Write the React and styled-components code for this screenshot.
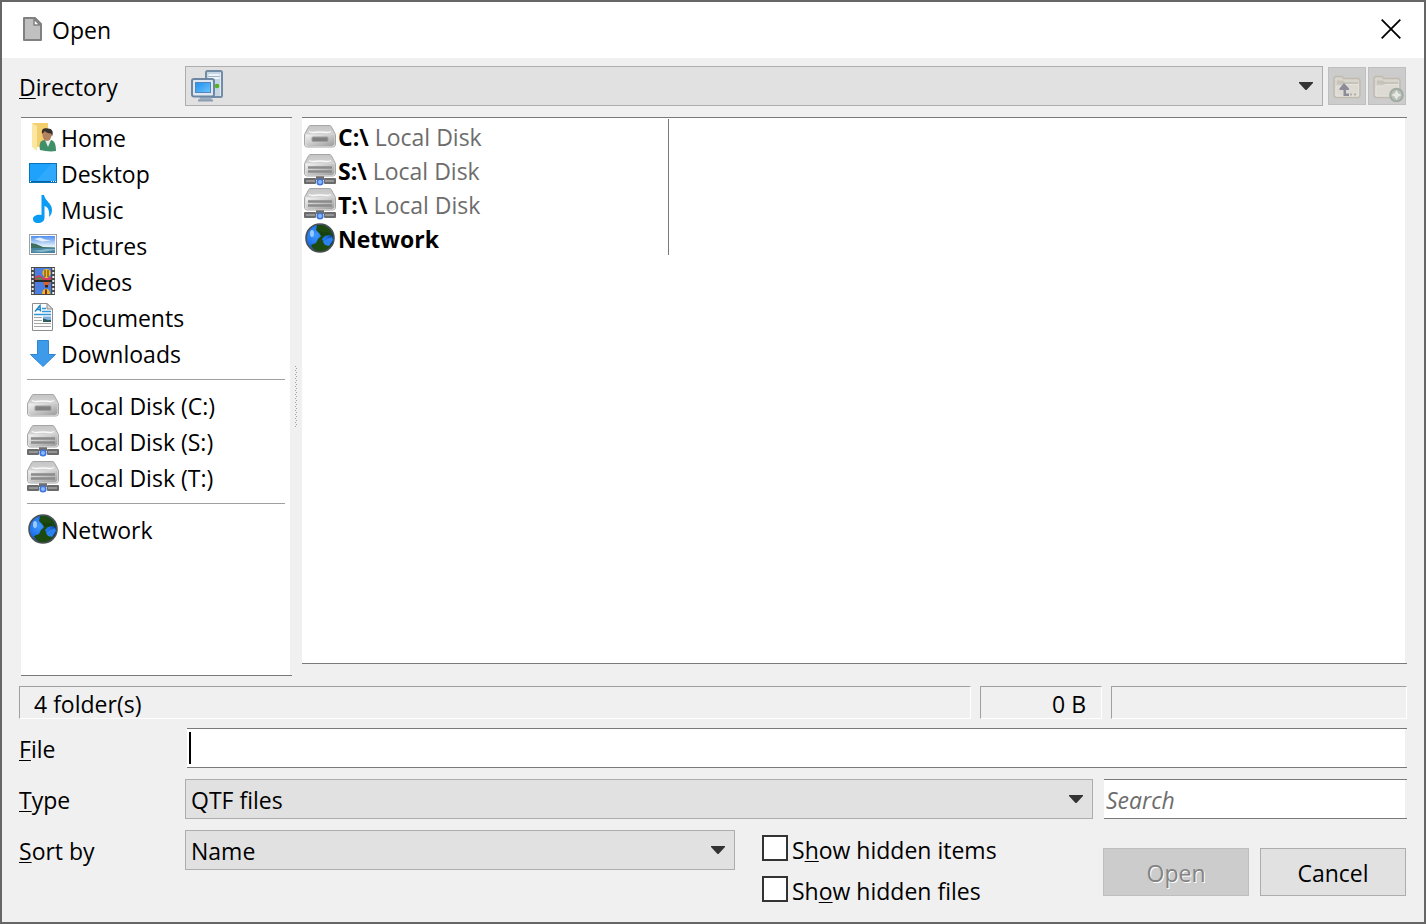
import React from 'react';
import styled, {createGlobalStyle, css} from 'styled-components';

const GlobalStyle = createGlobalStyle`
    * {
        box-sizing: border-box;
    }

    body {
        margin: 0;
        background: #f0f0f0;
    }

    body, button, input, select {
        font-family: "Open Sans", "Noto Sans", sans-serif;
        font-size: 23px;
        line-height: 32px;
        color: #000;
    }
`;

const Window = styled.div`
    display: flex;
    flex-direction: column;
    min-height: 100vh;
    border: 2px solid #666;
    background: #f0f0f0;
`;

const TitleBar = styled.header`
    display: flex;
    align-items: center;
    gap: 10px;
    height: 56px;
    padding: 0 21px 2px 20px;
    background: #fff;
`;

const Title = styled.h1`
    flex: 1;
    margin: 0;
    padding-top: 2px;
    font-size: 23px;
    font-weight: 400;
`;

const CloseButton = styled.button`
    display: flex;
    padding: 2px;
    border: 0;
    background: none;
`;

const Content = styled.main`
    flex: 1;
    display: flex;
    flex-direction: column;
    padding: 8px 17px 15px;
`;

const FormRow = styled.div`
    display: flex;
    align-items: flex-start;
    margin-top: ${props => props.$top || 0}px;
`;

const Label = styled.label`
    flex: none;
    width: 166px;
    padding-top: 5px;
`;

const Key = styled.span`
    text-decoration: underline;
    text-decoration-thickness: 1px;
    text-underline-offset: 2px;
    text-decoration-skip-ink: none;
`;

const Combo = styled.div`
    position: relative;
    flex: 1;
    height: 40px;

    select {
        appearance: none;
        width: 100%;
        height: 100%;
        padding: 2px 40px 0 5px;
        border: 1px solid #adadad;
        border-radius: 0;
        background: #e1e1e1;
        line-height: 36px;
    }
`;

const ComboArrow = styled.svg`
    position: absolute;
    top: 16px;
    right: 10px;
    pointer-events: none;
`;

const ComboIcon = styled.span`
    position: absolute;
    top: 4px;
    left: 6px;
    display: flex;
    pointer-events: none;
`;

const ToolButtons = styled.div`
    display: flex;
    gap: 2px;
    padding: 1px 1px 0 5px;
`;

const ToolButton = styled.button`
    width: 38px;
    height: 38px;
    padding: 0;
    border: 1px solid #bfbfbf;
    background: #ccc;

    svg {
        display: block;
    }
`;

const sunken = css`
    border: 0 solid #7a7a7a;
    border-width: 1px 0;
    background: #fff;
    box-shadow: inset -2px 0 #f0f0f0;
`;

const Panels = styled.div`
    flex: 1;
    display: flex;
    margin-top: 11px;
    padding-left: 2px;
`;

const Sidebar = styled.nav`
    ${sunken}
    width: 271px;
    padding: 1px 7px 0 6px;
`;

const Splitter = styled.div`
    display: flex;
    align-items: center;
    justify-content: center;
    width: 10px;
    padding-right: 2px;
`;

const FilePane = styled.section`
    ${sunken}
    flex: 1;
    margin-bottom: 12px;
    padding-top: 1px;
`;

const List = styled.ul`
    margin: 0;
    padding: 0;
    list-style: none;
`;

const FileColumn = styled(List)`
    width: 367px;
    padding-left: 2px;
    border-right: 1px solid #7a7a7a;
`;

const Entry = styled.li`
    display: flex;
    align-items: center;
    gap: ${props => props.$drive ? 9 : 2}px;
    height: ${props => props.$height}px;
    white-space: pre;

    svg {
        flex: none;
    }

    span {
        padding-top: 2px;
    }

    small {
        font-size: 23px;
        color: #6d6d6d;
    }
`;

const Separator = styled.hr`
    height: 1px;
    margin: 8px 0 7px;
    border: 0;
    background: #a0a0a0;
`;

const StatusBar = styled.footer`
    display: flex;
    gap: 9px;
    margin-top: 10px;
`;

const StatusCell = styled.div`
    flex: ${props => props.$width ? 'none' : 1};
    width: ${props => props.$width ? props.$width + 'px' : 'auto'};
    height: 33px;
    padding: 1px 15px 0 14px;
    border: 1px solid;
    border-color: #a0a0a0 #fff #fff #a0a0a0;
    text-align: ${props => props.$align || 'left'};
`;

const TextField = styled.div`
    position: relative;
    flex: ${props => props.$width ? 'none' : 1};
    width: ${props => props.$width ? props.$width + 'px' : 'auto'};
    margin-left: ${props => props.$left}px;

    input {
        ${sunken}
        display: block;
        width: 100%;
        height: 40px;
        padding: 2px 2px 0;
        border-radius: 0;
        outline: 0;
    }

    input::placeholder {
        color: #6d6d6d;
        font-style: italic;
        opacity: 1;
    }
`;

const Caret = styled.span`
    position: absolute;
    top: 4px;
    left: 2px;
    width: 2px;
    height: 32px;
    background: #000;
`;

const Options = styled.div`
    display: flex;
    flex-direction: column;
    gap: 9px;
    width: 368px;
    padding: 4px 0 0 27px;
`;

const CheckLabel = styled.label`
    display: flex;
    align-items: center;
    gap: 4px;

    input {
        appearance: none;
        width: 26px;
        height: 26px;
        margin: 0 0 4px;
        border: 2px solid #333;
        background: #fff;
    }

    input:checked {
        background: #333;
        box-shadow: inset 0 0 0 4px #fff;
    }
`;

const Actions = styled.div`
    display: flex;
    gap: 11px;
    width: 304px;
    padding: 18px 1px 0 0;
`;

const PushButton = styled.button`
    flex: 1;
    height: 48px;
    padding: 2px 0 0;
    border: 1px solid #adadad;
    background: #e1e1e1;

    &:disabled {
        border-color: #bfbfbf;
        background: #ccc;
        color: #838383;
        text-shadow: 1px 1px #fff;
    }
`;

const PageIcon = () => (
    <svg width="20" height="26" viewBox="0 0 20 26">
        <path d="M2 2h11l6 6v16H2z" fill="#c0c0c0" stroke="#808080" strokeWidth="2" strokeLinejoin="round"/>
        <path d="M12 3v6h6z" fill="#fff" stroke="#808080" strokeWidth="1.5"/>
    </svg>
);

const CloseIcon = () => (
    <svg width="20" height="20" viewBox="0 0 20 20">
        <path d="M.7.7l18.6 18.6M19.3.7L.7 19.3" stroke="#000" strokeWidth="1.8"/>
    </svg>
);

const Arrow = () => (
    <ComboArrow width="14" height="8" viewBox="0 0 14 8">
        <path d="M0 0h14v1L7.5 8h-1L0 1z" fill="#333"/>
    </ComboArrow>
);

const ComputerIcon = () => (
    <svg width="32" height="32" viewBox="0 0 32 32">
        <defs>
            <linearGradient id="screen" x1="0" y1="0" x2="1" y2="1">
                <stop offset="0" stopColor="#1f8ff0"/>
                <stop offset="1" stopColor="#6cc4fb"/>
            </linearGradient>
        </defs>
        <rect x="15" y="1" width="16" height="26" rx="1.5" fill="#c6d5e4" stroke="#738ca6" strokeWidth="2"/>
        <path d="M17.5 5h11M17.5 8h11" stroke="#eef4fa" strokeWidth="1.8"/>
        <path d="M17.5 6.5h11" stroke="#9eb2c6"/>
        <path d="M29.5 3v23" stroke="#e3ecf5"/>
        <circle cx="26" cy="16" r="2.3" fill="#57b21a"/>
        <path d="M9 27h11l1 3H8z" fill="#9fb2c4"/>
        <path d="M7 29.5h15v2H7z" fill="#8d9eb0"/>
        <rect x="1" y="9" width="22" height="17.5" rx="2" fill="#dfe8f0" stroke="#6d87a3" strokeWidth="2"/>
        <rect x="4.5" y="12.5" width="15" height="10" fill="url(#screen)" stroke="#5587ba"/>
    </svg>
);

const FolderShape = () => (
    <g>
        <path d="M6 29V11l1.500-1.500H14l1.500 2h15l1.500 1.500v16l-1.500 1.500h-23z" fill="#d8d5cd" stroke="#bfbab0" strokeWidth="1.4"/>
        <path d="M9 13.500h6l1.500 1.500H30v2.500H9z" fill="#c6c3bb"/>
        <path d="M8 29V19.500h7l2-2h13.500V29z" fill="#dddad3" stroke="#e4e2dc"/>
    </g>
);

const FolderUpIcon = () => (
    <svg width="36" height="36" viewBox="1 1 36 36">
        <FolderShape/>
        <path d="M16 16l5 5.500V23h-3v3.500h3V29h-5.500v-6h-4v-1.500z" fill="#8c8b98"/>
        <path d="M22 26.500h2v2h-2zM26 26.500h2v2h-2z" fill="#b5b1a0"/>
    </svg>
);

const NewFolderIcon = () => (
    <svg width="36" height="36" viewBox="1 1 36 36">
        <FolderShape/>
        <circle cx="28.500" cy="28" r="6.300" fill="#b9c0b8" stroke="#a0aaa2" strokeWidth="2"/>
        <path d="M28.500 23l1.700 3.300 3.300 1.700-3.300 1.700-1.700 3.300-1.700-3.300-3.300-1.700 3.300-1.700z" fill="#e6e9e4"/>
    </svg>
);

const HomeIcon = () => (
    <svg width="32" height="32" viewBox="0 0 32 32">
        <path d="M5 2h16v24H9z" fill="#f3cf6e"/>
        <path d="M5 2l5 3v25l-5-4z" fill="#fbe6a2"/>
        <path d="M13 29c-1-6 0-10 5-10l3 1 3-1c4 1 5 5 5 11-6 1-11 0-16-1z" fill="#3f8f68"/>
        <path d="M18 19l3 7 3-7-3-2z" fill="#e8eee8"/>
        <ellipse cx="20" cy="14" rx="4.5" ry="6" fill="#b3835f"/>
        <path d="M15 13c-1-6 3-6 6-5.500 4 0 6 3 4 8l-1-3c-3 0-5-1-6-2.500-1 1-2 2-3 3z" fill="#37302c"/>
    </svg>
);

const DesktopIcon = () => (
    <svg width="32" height="32" viewBox="0 0 32 32">
        <rect x="2.500" y="6.500" width="27" height="19" fill="#1fa2fb" stroke="#0574b8"/>
        <path d="M9 24L24 7h5v17z" fill="#45b3fd" opacity=".4"/>
        <path d="M3 24.500h26" stroke="#0863a4"/>
        <path d="M3 24.500h2M24 24.500h5" stroke="#fff" strokeDasharray="1 1"/>
    </svg>
);

const MusicIcon = () => (
    <svg width="32" height="32" viewBox="0 0 32 32">
        <path d="M14.500 2h2.500c1 6 8 8 8 15 0 3-1 5-3 7 1-6-1-10-4.500-11v12c0 3-3 5-6.500 5s-5-2-5-4c0-3 4-5 8.500-4z" fill="#0a9cf5"/>
    </svg>
);

const PicturesIcon = () => (
    <svg width="32" height="32" viewBox="0 0 32 32">
        <defs>
            <linearGradient id="sky" x1="0" y1="0" x2="0" y2="1">
                <stop offset="0" stopColor="#4f8fee"/>
                <stop offset=".6" stopColor="#e4f2fb"/>
                <stop offset="1" stopColor="#5c9cb5"/>
            </linearGradient>
        </defs>
        <rect x="2.500" y="5.500" width="27" height="20" fill="#fff" stroke="#a0a0a0"/>
        <rect x="4" y="7" width="24" height="17" fill="url(#sky)"/>
        <path d="M4 14l5 1 7 3 12 .5v2H4z" fill="#3d7062"/>
        <path d="M4 19h24v5H4z" fill="#4686a2"/>
        <path d="M4 22l9-1 6-1h9v1l-13 2z" fill="#86b8c9"/>
        <path d="M7 10l6-1.500 5 2 6 1-9 1z" fill="#fff" opacity=".8"/>
    </svg>
);

const VideosIcon = () => (
    <svg width="32" height="32" viewBox="0 0 32 32">
        <path d="M4 2h24v28H4z" fill="#4a4a4a"/>
        <path d="M5.700 3v27M26.300 3v27" stroke="#eee" strokeWidth="2" strokeDasharray="2 2"/>
        <path d="M8 3h16v12H8zM8 17h16v12H8z" fill="#4c7ee2"/>
        <path d="M8 12l4-2 5 3 7-1v3H8z" fill="#d23a63"/>
        <path d="M8 14l5-2 3 3z" fill="#3c9b3c"/>
        <path d="M15.500 8a4 4 0 018 0c0 3-2 3-2.500 5h-3c-.5-2-2.500-2-2.500-5z" fill="#f2bd22"/>
        <path d="M18 5v7M21 5v7" stroke="#5c3018"/>
        <path d="M16 17h7l-2 4h-3z" fill="#d9612a"/>
        <path d="M18 20h3v2.500h-3z" fill="#40200f"/>
        <path d="M15 29c0-7 8-7 8 0z" fill="#f0b91f"/>
        <path d="M19 24.500v4.500" stroke="#7e2a25" strokeWidth="2"/>
        <path d="M7 16h18" stroke="#222" strokeWidth="1.5"/>
    </svg>
);

const DocumentsIcon = () => (
    <svg width="32" height="32" viewBox="0 0 32 32">
        <path d="M5.500 2.500H20l5.500 5.500v21.500h-20z" fill="#fdfdfd" stroke="#8e8e8e"/>
        <path d="M20 2.500V8h5.500z" fill="#ddd" stroke="#8e8e8e"/>
        <path d="M8 10.500l5-6 .5 6M10 8.500h3.500" fill="none" stroke="#1585c9" strokeWidth="1.4"/>
        <path d="M15 7.500h4M15 10.500h9M7 13.500h17" stroke="#3197d6" strokeWidth="1.3"/>
        <path d="M7 16.500h8M7 19.500h8M7 22.500h17M7 25.500h17" stroke="#a6a6a6"/>
        <path d="M16 15.500h8v5.500h-8z" fill="#7cb0de"/>
        <path d="M16 17.500l5 1.500h3v2h-8z" fill="#2d5b5d"/>
    </svg>
);

const DownloadsIcon = () => (
    <svg width="32" height="32" viewBox="0 0 32 32">
        <path d="M10.500 3.500h11v14h7L16 29.500 3.500 17.500h7z" fill="#3e9bea" stroke="#2f86d6"/>
    </svg>
);

const DriveIcon = ({network}) => (
    <svg width="32" height="32" viewBox="0 0 32 32">
        <defs>
            <linearGradient id="driveTop" x1="0" y1="0" x2="0" y2="1">
                <stop offset="0" stopColor="#c4c4c4"/>
                <stop offset="1" stopColor="#ececec"/>
            </linearGradient>
            <linearGradient id="driveFront" x1="0" y1="0" x2="1" y2="1">
                <stop offset="0" stopColor="#f4f4f4"/>
                <stop offset="1" stopColor="#9c9c9c"/>
            </linearGradient>
        </defs>
        {network && (
            <g>
                <path d="M12 19h8v7h-8z" fill="#6f6f6f"/>
                <rect x="0" y="24" width="12" height="6" rx="1" fill="#6b6b6b"/>
                <rect x="20" y="24" width="12" height="6" rx="1" fill="#6b6b6b"/>
                <path d="M2 27h9M21 27h9" stroke="#969696" strokeWidth="2"/>
            </g>
        )}
        <g transform={network ? 'translate(0 -5)' : undefined}>
            <path d="M7 5.500h18c1.500 0 2 .5 2.500 1.500l4 7.500V24c0 2-1 3-3 3h-25c-2 0-3-1-3-3v-9.500L4.500 7C5 6 5.500 5.500 7 5.500z" fill="url(#driveTop)" stroke="#a6a6a6"/>
            <path d="M5 11.500c3 2 6 .5 11 .5s8 1.500 11-.5" fill="none" stroke="#fafafa" strokeWidth="1.4"/>
            <path d="M1.500 14.500h29V23c0 2-1 3-3 3h-23c-2 0-3-1-3-3z" fill="url(#driveFront)"/>
            {network
                ? <path d="M4 18.500h24M4 22.500h24" stroke="#8b8b8b" strokeWidth="2.4"/>
                : <rect x="8" y="17" width="16" height="4.500" rx="1" fill="#808080" stroke="#a0a0a0"/>}
        </g>
        {network && <circle cx="16" cy="28" r="2.800" fill="#8cb8ff" stroke="#3d75df" strokeWidth="1.6"/>}
    </svg>
);

const NetworkIcon = () => (
    <svg width="32" height="32" viewBox="0 0 32 32">
        <defs>
            <radialGradient id="globe" cx=".35" cy=".4" r=".7">
                <stop offset="0" stopColor="#3f98ff"/>
                <stop offset=".55" stopColor="#1c70e8"/>
                <stop offset="1" stopColor="#0c2450"/>
            </radialGradient>
        </defs>
        <circle cx="16" cy="16" r="14" fill="url(#globe)"/>
        <path d="M13 3h7l6 4 3 7-4-1-4 1-3 3 2 4 4 2 4-1-4 6-8 2c-5-1-8-4-9-7l5-2 2-4 3-3-2-3-3-3z" fill="#1d4a10"/>
        <path d="M15.500 9l4 1.500 5-.5 1 2.500-5 1-3 .5z" fill="#16400f"/>
        <path d="M19 20l4-3 5-2 1 3-4 6-4-1z" fill="#2b82ee"/>
        <ellipse cx="8" cy="11.500" rx="2" ry="3.5" fill="#b5dbff" opacity=".8"/>
        <circle cx="16" cy="16" r="14" fill="none" stroke="#4a5054" strokeWidth="1.6"/>
    </svg>
);

const places = [
    {name: 'Home', icon: <HomeIcon/>},
    {name: 'Desktop', icon: <DesktopIcon/>},
    {name: 'Music', icon: <MusicIcon/>},
    {name: 'Pictures', icon: <PicturesIcon/>},
    {name: 'Videos', icon: <VideosIcon/>},
    {name: 'Documents', icon: <DocumentsIcon/>},
    {name: 'Downloads', icon: <DownloadsIcon/>},
];

const drives = [
    {letter: 'C:', network: false},
    {letter: 'S:', network: true},
    {letter: 'T:', network: true},
];

const Places = () => (
    <Sidebar aria-label="Places">
        <List>
            {places.map(place => (
                <Entry key={place.name} $height={36}>{place.icon}<span>{place.name}</span></Entry>
            ))}
        </List>
        <Separator/>
        <List>
            {drives.map(drive => (
                <Entry key={drive.letter} $height={36} $drive>
                    <DriveIcon network={drive.network}/>
                    <span>Local Disk ({drive.letter})</span>
                </Entry>
            ))}
        </List>
        <Separator/>
        <List>
            <Entry $height={36}><NetworkIcon/><span>Network</span></Entry>
        </List>
    </Sidebar>
);

const Files = () => (
    <FilePane>
        <FileColumn>
            {drives.map(drive => (
                <Entry key={drive.letter} $height={34}>
                    <DriveIcon network={drive.network}/>
                    <span><b>{drive.letter}\</b> <small>Local Disk</small></span>
                </Entry>
            ))}
            <Entry $height={34}><NetworkIcon/><span><b>Network</b></span></Entry>
        </FileColumn>
    </FilePane>
);

const Grip = () => (
    <svg width="3" height="62" viewBox="0 0 3 62">
        <path d="M.5 0v62" stroke="#a0a0a0" strokeDasharray="1 3"/>
        <path d="M1.500 2v60" stroke="#a0a0a0" strokeDasharray="1 3"/>
    </svg>
);

export default function App() {
    return (
        <Window>
            <GlobalStyle/>
            <TitleBar>
                <PageIcon/>
                <Title>Open</Title>
                <CloseButton aria-label="Close"><CloseIcon/></CloseButton>
            </TitleBar>
            <Content>
                <FormRow>
                    <Label htmlFor="directory"><Key>D</Key>irectory</Label>
                    <Combo>
                        <select id="directory"><option value=""/></select>
                        <ComboIcon><ComputerIcon/></ComboIcon>
                        <Arrow/>
                    </Combo>
                    <ToolButtons>
                        <ToolButton disabled aria-label="Parent directory"><FolderUpIcon/></ToolButton>
                        <ToolButton disabled aria-label="New directory"><NewFolderIcon/></ToolButton>
                    </ToolButtons>
                </FormRow>
                <Panels>
                    <Places/>
                    <Splitter><Grip/></Splitter>
                    <Files/>
                </Panels>
                <StatusBar>
                    <StatusCell>4 folder(s)</StatusCell>
                    <StatusCell $width={122} $align="right">0 B</StatusCell>
                    <StatusCell $width={296}/>
                </StatusBar>
                <FormRow $top={9}>
                    <Label htmlFor="file"><Key>F</Key>ile</Label>
                    <TextField $left={2}>
                        <input id="file" type="text"/>
                        <Caret/>
                    </TextField>
                </FormRow>
                <FormRow $top={11}>
                    <Label htmlFor="type"><Key>T</Key>ype</Label>
                    <Combo>
                        <select id="type"><option>QTF files</option></select>
                        <Arrow/>
                    </Combo>
                    <TextField $left={11} $width={303}>
                        <input type="text" placeholder="Search" aria-label="Search"/>
                    </TextField>
                </FormRow>
                <FormRow $top={11}>
                    <Label htmlFor="sort"><Key>S</Key>ort by</Label>
                    <Combo>
                        <select id="sort"><option>Name</option></select>
                        <Arrow/>
                    </Combo>
                    <Options>
                        <CheckLabel>
                            <input type="checkbox"/>
                            <span>S<Key>h</Key>ow hidden items</span>
                        </CheckLabel>
                        <CheckLabel>
                            <input type="checkbox"/>
                            <span>Sh<Key>o</Key>w hidden files</span>
                        </CheckLabel>
                    </Options>
                    <Actions>
                        <PushButton disabled>Open</PushButton>
                        <PushButton>Cancel</PushButton>
                    </Actions>
                </FormRow>
            </Content>
        </Window>
    );
}
